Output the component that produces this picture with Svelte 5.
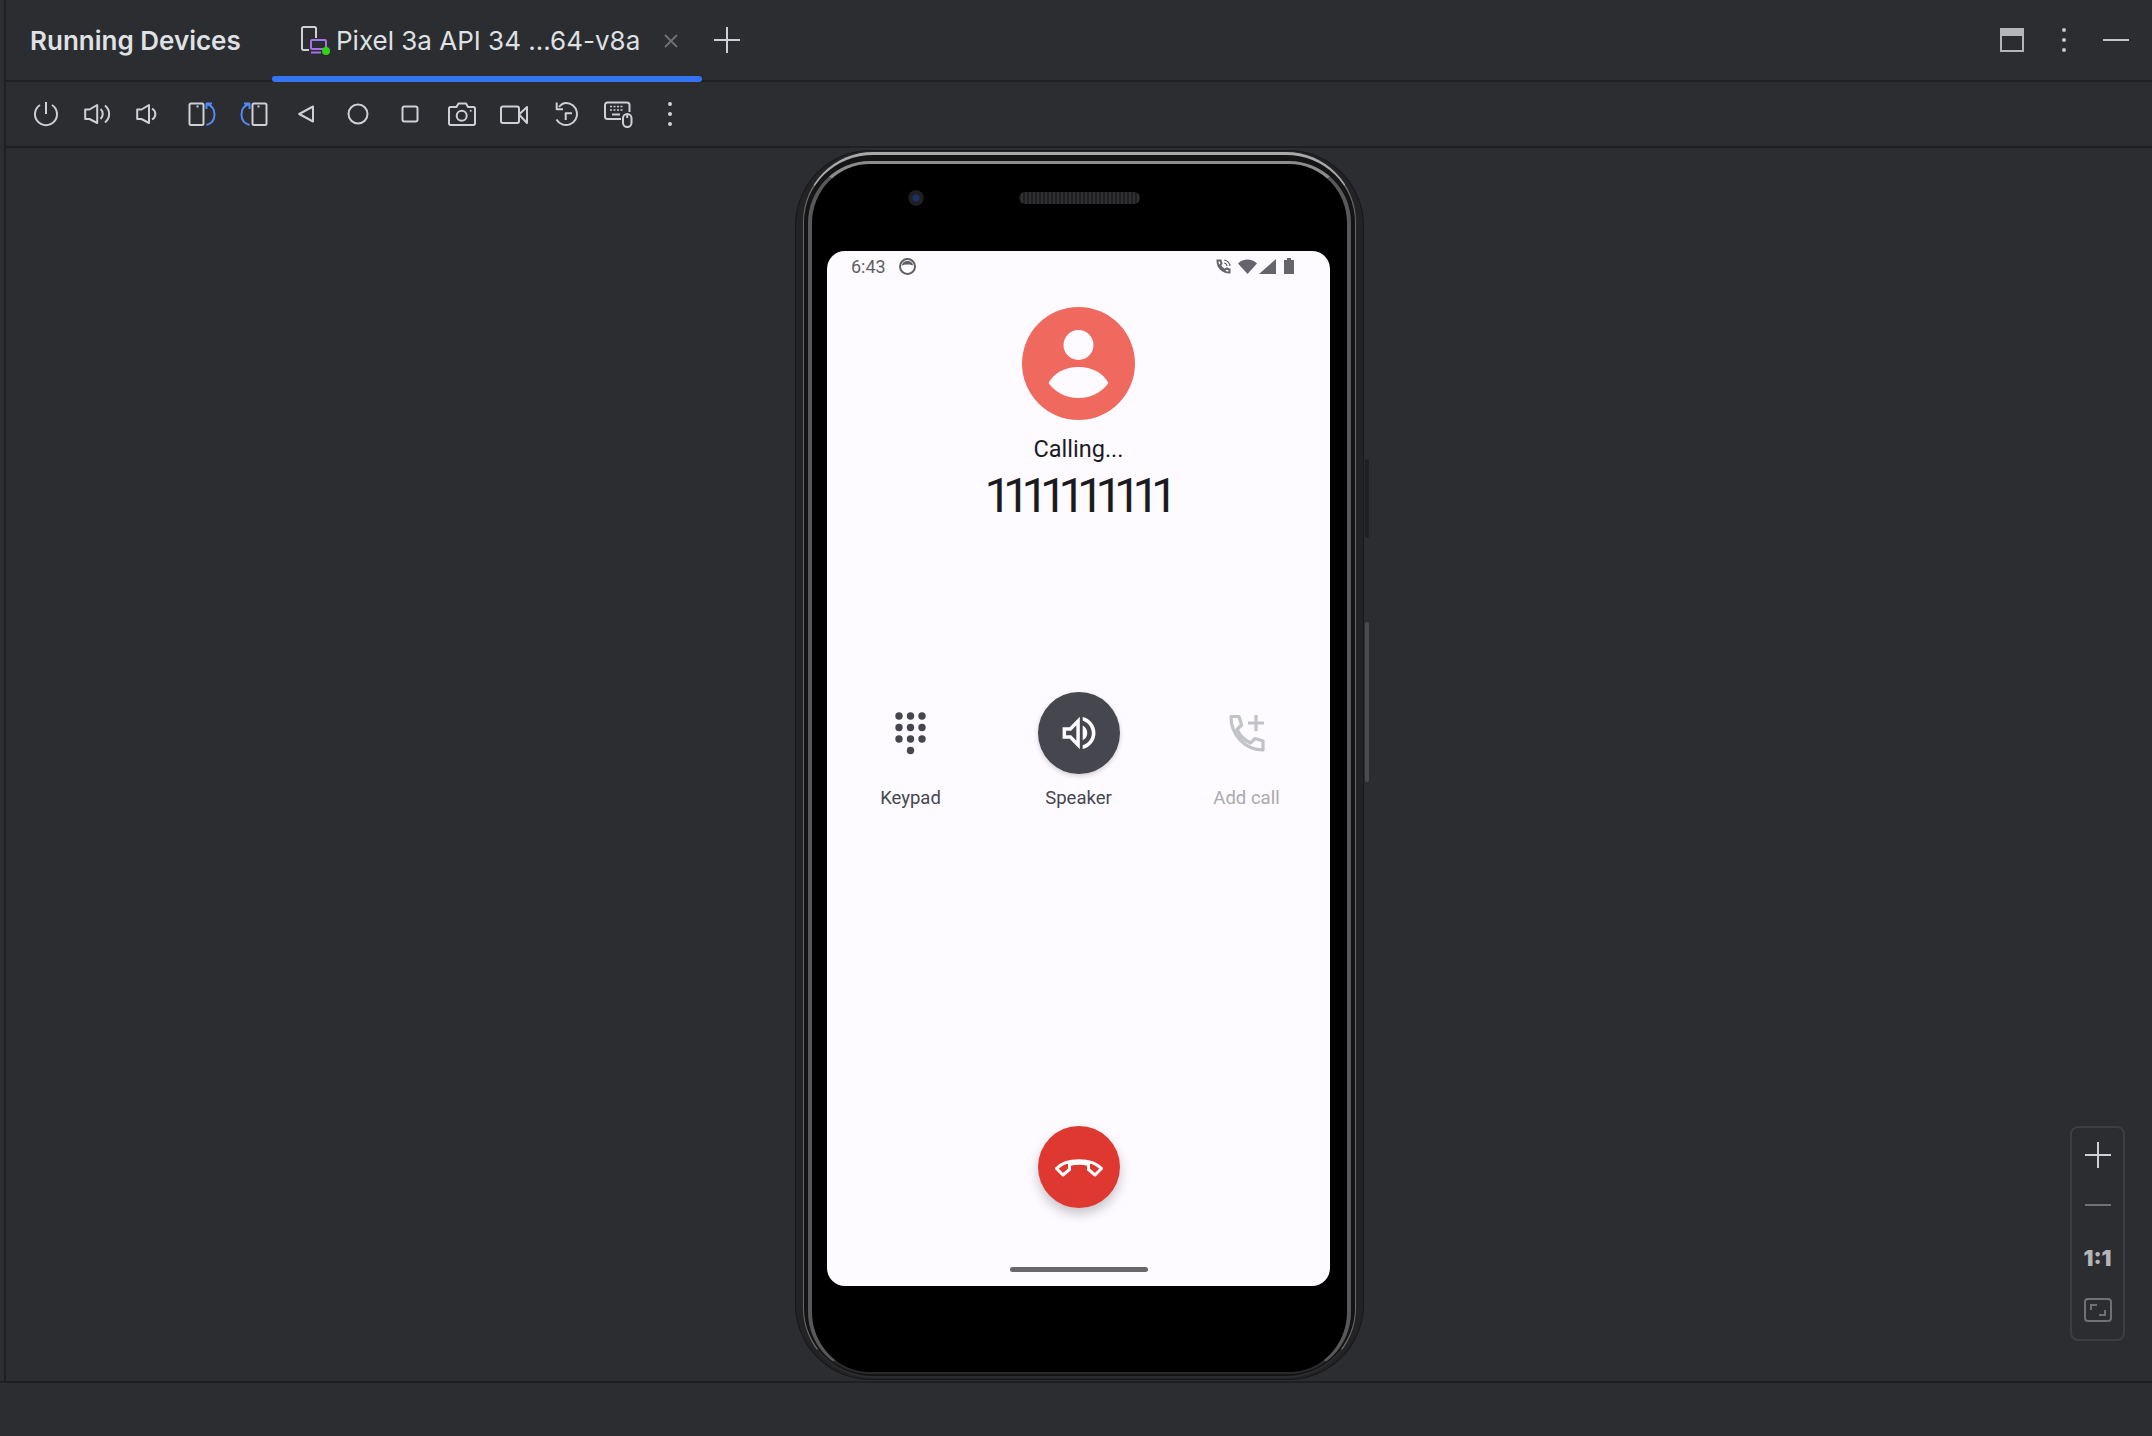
<script lang="ts">
  const actions = [
    { label: 'Keypad' },
    { label: 'Speaker' },
    { label: 'Add call' }
  ]
  const keypadDots = [
    [5, 5], [16.5, 5], [28, 5],
    [5, 16.5], [16.5, 16.5], [28, 16.5],
    [5, 28], [16.5, 28], [28, 28],
    [16.5, 39.5]
  ]
</script>

<div class="panel">
  <header class="tabs">
    <span class="title">Running Devices</span>
    <div class="tab">
      <svg class="tab-icon" width="32" height="30" viewBox="0 0 32 30" fill="none">
        <path d="M9 25H3.5a1.5 1.5 0 0 1-1.5-1.5V3.5A1.5 1.5 0 0 1 3.500 2h11A1.500 1.500 0 0 1 16 3.500V13" stroke="#ced0d6" stroke-width="2"/>
        <rect x="11" y="15" width="15" height="9" rx="1" stroke="#a571e6" stroke-width="2"/>
        <path d="M11 27.500h10" stroke="#a571e6" stroke-width="2"/>
        <circle cx="26" cy="26" r="4" fill="#2fd41a"/>
      </svg>
      <span class="tab-name">Pixel 3a API 34 ...64-v8a</span>
      <svg class="tab-close" width="16" height="16" viewBox="0 0 16 16" fill="none">
        <path d="M2 2l12 12M14 2L2 14" stroke="#6f7175" stroke-width="1.800"/>
      </svg>
      <span class="underline"></span>
    </div>
    <svg class="add" width="28" height="28" viewBox="0 0 28 28" fill="none">
      <path d="M14 1v26M1 14h26" stroke="#ced0d6" stroke-width="2"/>
    </svg>
    <div class="window-actions">
      <svg width="24" height="24" viewBox="0 0 24 24" fill="none">
        <rect x="1" y="1" width="22" height="22" stroke="#b4b5b8" stroke-width="2"/>
        <rect x="0" y="0" width="24" height="8" fill="#b4b5b8"/>
      </svg>
      <svg class="kebab-small" width="6" height="26" viewBox="0 0 6 26" fill="#c4c5c8">
        <circle cx="3" cy="3" r="2"/><circle cx="3" cy="13" r="2"/><circle cx="3" cy="23" r="2"/>
      </svg>
      <span class="minimize"></span>
    </div>
  </header>

  <div class="toolbar">
    <svg viewBox="0 0 28 28" class="icon">
      <path d="M8 5A11 11 0 1 0 20 5M14 2v12"/>
    </svg>
    <svg viewBox="0 0 28 28" class="icon">
      <path d="M1.200 9.500H5.500L13.200 5V23L5.500 19H1.200Z"/>
      <path d="M16.500 9C19.500 11.500 19.500 16.500 16.500 19M21 5.500C26.500 10 26.500 18 21 22.500"/>
    </svg>
    <svg viewBox="0 0 28 28" class="icon">
      <path d="M1.200 9.500H5.500L13 5V23L5.500 19H1.200Z"/>
      <path d="M16 8.500C20.500 11 20.500 17 16 19.500"/>
    </svg>
    <svg viewBox="0 0 28 28" class="icon">
      <rect x="1.500" y="3.500" width="14" height="21.500" rx="1.500"/>
      <path d="M8.500 6.500h2" />
      <path class="blue" d="M19 4C23.500 5.500 26.500 9.500 26.500 14.500S23.500 23.500 18.500 25M18.500 9V3.500H24"/>
    </svg>
    <svg viewBox="0 0 28 28" class="icon">
      <rect x="12.500" y="3.500" width="14" height="21.500" rx="1.500"/>
      <path d="M17.500 6.500h2" />
      <path class="blue" d="M9 4C4.500 5.500 1.500 9.500 1.500 14.500S4.500 23.500 9.500 25M9.500 9V3.500H4"/>
    </svg>
    <svg viewBox="0 0 28 28" class="icon">
      <path d="M21 6.500V21.500L7.200 14Z"/>
    </svg>
    <svg viewBox="0 0 28 28" class="icon">
      <circle cx="14" cy="14" r="9.500"/>
    </svg>
    <svg viewBox="0 0 28 28" class="icon">
      <rect x="6.500" y="6.500" width="15" height="15" rx="2"/>
    </svg>
    <svg viewBox="0 0 28 28" class="icon">
      <path d="M2.500 7H8.500L10.500 3.500H18L20 7H25.500A1.500 1.500 0 0 1 27 8.500V23.500A1.500 1.500 0 0 1 25.500 25H2.500A1.500 1.500 0 0 1 1 23.500V8.500A1.500 1.500 0 0 1 2.500 7Z"/>
      <circle cx="13.700" cy="15.700" r="5"/>
      <circle class="dot" cx="22.700" cy="10.700" r="1"/>
    </svg>
    <svg viewBox="0 0 28 28" class="icon">
      <rect x="1" y="6.500" width="18" height="16.500" rx="2"/>
      <path d="M19 14.500L27 7V23Z"/>
    </svg>
    <svg viewBox="0 0 28 28" class="icon">
      <path d="M7 7C9 4.500 11 3 14 3A11 11 0 1 1 4.500 19.500"/>
      <path d="M4.700 2.500V9.300H11M20 13.300H13.700V20"/>
    </svg>
    <svg viewBox="0 0 28 28" class="icon">
      <path d="M17 19H3.500A2.500 2.500 0 0 1 1 16.500V5A2.500 2.500 0 0 1 3.500 2.500H23A2.500 2.500 0 0 1 25.500 5V12"/>
      <path class="thin" d="M6 6.500h14M6 10h14" stroke-dasharray="2 1.500"/>
      <path d="M8 14.500h8"/>
      <rect x="19" y="14" width="8.500" height="13" rx="4.200"/>
      <path d="M23.200 14v4"/>
    </svg>
    <svg viewBox="0 0 28 28" class="icon">
      <circle class="dot" cx="14" cy="4" r="2"/>
      <circle class="dot" cx="14" cy="14" r="2"/>
      <circle class="dot" cx="14" cy="24" r="2"/>
    </svg>
  </div>

  <main class="stage">
    <div class="phone">
      <span class="side-btn power"></span>
      <span class="side-btn volume"></span>
      <div class="midframe">
        <div class="bezel">
          <span class="camera"></span>
          <span class="earpiece"></span>
          <div class="screen">
            <div class="statusbar">
              <span class="clock">6:43</span>
              <svg class="face" width="17" height="17" viewBox="0 0 17 17">
                <circle cx="8.500" cy="8.500" r="7.500" fill="#fff" stroke="#5f5f66" stroke-width="2"/>
                <path d="M3 7.500C3.500 4 6 3 8.500 3S13.500 4 14 7.500C11.500 6 5.500 6 3 7.500Z" fill="#5f5f66"/>
              </svg>
              <span class="status-gap"></span>
              <svg width="15" height="15" viewBox="0 0 15 15" fill="none">
                <path d="M1.500 1.500H4.500L5.500 4.500L4 6.200C5 8.500 6.500 10 8.800 11L10.500 9.500L13.500 10.500V13.500C6.500 13.500 1.500 8.500 1.500 1.500Z" stroke="#66646b" stroke-width="2"/>
                <path d="M8 4C9.500 4.200 10.800 5.500 11 7M8 1C11 1.200 13.800 4 14 7" stroke="#66646b" stroke-width="1.200"/>
              </svg>
              <svg class="wifi" width="19" height="15" viewBox="0 0 19 15">
                <path d="M0 4.500C5 -0.800 14 -0.800 19 4.500L9.500 15Z" fill="#66646b"/>
              </svg>
              <svg class="signal" width="17" height="15" viewBox="0 0 17 15">
                <path d="M17 0V15H0Z" fill="#66646b"/>
              </svg>
              <svg class="battery" width="10" height="16" viewBox="0 0 10 16">
                <path d="M3 0H7V2H10V16H0V2H3Z" fill="#66646b"/>
              </svg>
            </div>

            <svg class="avatar" width="113" height="113" viewBox="0 0 113 113">
              <circle cx="56.500" cy="56.500" r="56.500" fill="#f0695e"/>
              <circle cx="56.500" cy="38" r="15" fill="#fdfbff"/>
              <path d="M26.500 76C32 66 43 60 56.500 60C70 60 81 66 86.500 76C80 85 69 91 56.500 91C44 91 33 85 26.500 76Z" fill="#fdfbff"/>
            </svg>
            <div class="calling">Calling...</div>
            <div class="number">1111111111</div>

            <div class="actions">
              {#each actions as action, i}
                <div class="action" class:disabled={i === 2}>
                  <div class="action-btn" class:active={i === 1}>
                    {#if i === 0}
                      <svg width="33" height="44" viewBox="0 0 33 44" fill="#46464f">
                        {#each keypadDots as [cx, cy]}
                          <circle {cx} {cy} r="3.700"/>
                        {/each}
                      </svg>
                    {:else if i === 1}
                      <svg width="44" height="44" viewBox="0 0 24 24" fill="#fdfbff">
                        <path d="M4 9.800v4.400h3.300l4.200 4.300V5.500L7.300 9.800H4Z" fill="none" stroke="#fdfbff" stroke-width="1.900"/>
                        <path d="M16.500 12c0-1.770-1.020-3.290-2.500-4.030v8.050c1.480-.73 2.500-2.250 2.500-4.020z"/>
                        <path d="M14 3.230v2.060c2.890.86 5 3.540 5 6.710s-2.110 5.850-5 6.710v2.060c4.010-.91 7-4.490 7-8.770s-2.990-7.860-7-8.770z"/>
                      </svg>
                    {:else}
                      <svg width="36" height="38" viewBox="0 0 36 38" fill="none" stroke="#c1c3c6" stroke-width="3.200">
                        <path d="M2 2.500H10L12.500 11L8 15.500C11 22 15 26 21.500 29L26 24.500L34 27V36C16 36 2 21 2 2.500Z" stroke-linejoin="round"/>
                        <path d="M27 1V17M19 9H35"/>
                      </svg>
                    {/if}
                  </div>
                  <span class="action-label">{action.label}</span>
                </div>
              {/each}
            </div>

            <div class="end-call">
              <svg width="48" height="20" viewBox="0 0 48 20" fill="none">
                <path d="M14.500 7.500C20 6 28 6 33.500 7.500V12.500L40 18L46.500 11.500C37 1 11 1 1.500 11.500L8 18L14.500 12.500Z" stroke="#fff" stroke-width="3" stroke-linejoin="round"/>
              </svg>
            </div>
            <span class="home-bar"></span>
          </div>
        </div>
      </div>
    </div>

    <div class="zoom-controls">
      <svg width="26" height="26" viewBox="0 0 26 26">
        <path d="M13 0v26M0 13h26" stroke="#ced0d6" stroke-width="2"/>
      </svg>
      <span class="zoom-out"></span>
      <span class="one-to-one">1:1</span>
      <svg width="28" height="24" viewBox="0 0 28 24" fill="none" stroke="#6f7175" stroke-width="2">
        <rect x="1" y="1" width="26" height="22" rx="3"/>
        <path d="M7 12V7H13M21 12V17H15"/>
      </svg>
    </div>
  </main>
</div>
<div class="footer"></div>

<style>
  :global(body) {
    margin: 0;
    background: #2b2d30;
    font-family: Inter, "Liberation Sans", sans-serif;
  }

  .panel {
    margin-left: 4px;
    border-left: 2px solid #1e1f22;
    height: 1381px;
    display: flex;
    flex-direction: column;
    box-sizing: border-box;
  }

  .tabs {
    height: 82px;
    flex-shrink: 0;
    box-sizing: border-box;
    border-bottom: 2px solid #1e1f22;
    display: flex;
    align-items: center;
    padding: 0 23px 0 24px;
    color: #dfe1e5;
  }
  .title { font-size: 26px; font-weight: 600; width: 242px; flex-shrink: 0; }
  .tab {
    position: relative;
    display: flex;
    align-items: center;
    width: 430px;
    height: 80px;
    box-sizing: border-box;
    padding-left: 28px;
    flex-shrink: 0;
  }
  .tab-icon { flex-shrink: 0; }
  .tab-name { font-size: 26px; margin-left: 4px; white-space: nowrap; }
  .tab-close { position: absolute; left: 391px; top: 33px; }
  .underline {
    position: absolute;
    left: 0;
    right: 0;
    bottom: -2px;
    height: 6px;
    border-radius: 3px;
    background: #3574f0;
  }
  .add { margin-left: 11px; }
  .window-actions {
    margin-left: auto;
    display: flex;
    align-items: center;
  }
  .kebab-small { margin: 0 36px 0 37px; }
  .minimize { width: 26px; height: 2px; background: #c4c5c8; }

  .toolbar {
    height: 66px;
    flex-shrink: 0;
    box-sizing: border-box;
    border-bottom: 2px solid #1e1f22;
    padding-left: 26px;
    display: flex;
    align-items: center;
    gap: 24px;
  }
  .icon {
    width: 28px;
    height: 28px;
    flex-shrink: 0;
    fill: none;
    stroke: #ced0d6;
    stroke-width: 2;
    stroke-linejoin: round;
    overflow: visible;
  }
  .icon .blue { stroke: #548af7; }
  .icon .dot { fill: #ced0d6; stroke: none; }
  .icon .thin { stroke-width: 1.600; }

  .stage {
    position: relative;
    flex: 1;
    display: flex;
    justify-content: center;
    align-items: flex-start;
    padding: 2px 0 0 1px;
  }

  .phone {
    position: relative;
    width: 569px;
    height: 1230px;
    box-sizing: border-box;
    padding: 2px 8px;
    border-radius: 76px;
    background: #232325;
    box-shadow: inset 0 0 0 1px #18181a;
  }
  .side-btn {
    position: absolute;
    left: 570px;
    width: 4px;
    border-radius: 2px;
  }
  .power { top: 309px; height: 79px; background: #1f2022; }
  .volume { top: 472px; height: 160px; background: #4a4b4d; }

  .midframe {
    height: 100%;
    box-sizing: border-box;
    border-style: solid;
    border-width: 3px 1px 2px;
    border-color: #a9a9ab #6a6a6c #2c2c2e;
    border-radius: 70px;
    padding: 6px 4px 2px;
    background: #141415;
  }
  .bezel {
    position: relative;
    height: 100%;
    box-sizing: border-box;
    border-style: solid;
    border-width: 3px 4px 2px;
    border-color: #8c8c8e #58585a #2a2a2c;
    border-radius: 62px;
    background: #000;
    padding: 87px 17px 0 15px;
  }
  .camera {
    position: absolute;
    left: 96px;
    top: 26px;
    width: 16px;
    height: 16px;
    border-radius: 50%;
    background: radial-gradient(circle, #1d2f66 0 3px, #1f1f24 4px 7px, #121214 8px);
  }
  .earpiece {
    position: absolute;
    left: 207px;
    top: 28px;
    width: 121px;
    height: 12px;
    border-radius: 6px;
    background: repeating-linear-gradient(90deg, #1f1f21 0 2px, #313133 2px 4px);
  }

  .screen {
    height: 1035px;
    border-radius: 18px;
    background: #fdfbff;
    display: flex;
    flex-direction: column;
    align-items: center;
    overflow: hidden;
    font-family: Roboto, "Noto Sans", sans-serif;
  }

  .statusbar {
    align-self: stretch;
    height: 30px;
    flex-shrink: 0;
    box-sizing: border-box;
    padding: 0 36px 0 24px;
    display: flex;
    align-items: center;
    color: #5f5f66;
  }
  .clock { font-size: 18px; width: 48px; }
  .status-gap { flex: 1; }
  .wifi { margin-left: 7px; }
  .signal { margin-left: 2px; }
  .battery { margin-left: 8px; }

  .avatar { margin-top: 26px; flex-shrink: 0; }
  .calling {
    margin-top: 13px;
    font-size: 23.500px;
    line-height: 32px;
    color: #1b1b1f;
  }
  .number {
    margin-top: 3px;
    font-size: 48px;
    line-height: 56px;
    letter-spacing: -8.500px;
    padding-right: 3px;
    color: #1b1b1f;
  }

  .actions {
    margin-top: 168px;
    align-self: stretch;
    display: grid;
    grid-template-columns: repeat(3, 168px);
    justify-content: center;
  }
  .action {
    display: flex;
    flex-direction: column;
    align-items: center;
    gap: 11px;
  }
  .action-btn {
    width: 82px;
    height: 82px;
    border-radius: 50%;
    display: flex;
    align-items: center;
    justify-content: center;
  }
  .action-btn.active {
    background: #46464f;
    box-shadow: 0 2px 5px rgba(0, 0, 0, 0.18);
  }
  .action-label { font-size: 18.500px; line-height: 26px; color: #46464f; }
  .disabled .action-label { color: #abaaae; }

  .end-call {
    margin-top: 315px;
    width: 82px;
    height: 82px;
    flex-shrink: 0;
    border-radius: 50%;
    background: #df3831;
    display: flex;
    align-items: center;
    justify-content: center;
    box-shadow: 0 6px 12px rgba(0, 0, 0, 0.22);
  }
  .home-bar {
    margin-top: 59px;
    width: 138px;
    height: 5px;
    flex-shrink: 0;
    border-radius: 3px;
    background: #69676c;
  }

  .zoom-controls {
    position: absolute;
    right: 27px;
    top: 978px;
    width: 55px;
    height: 215px;
    box-sizing: border-box;
    border: 2px solid #3c3e41;
    border-radius: 8px;
    display: flex;
    flex-direction: column;
    align-items: center;
    padding-top: 14px;
  }
  .zoom-out { width: 26px; height: 2px; background: #6f7175; margin-top: 36px; }
  .one-to-one {
    margin-top: 39px;
    font-size: 22px;
    line-height: 26px;
    font-weight: 900;
    color: #b4b5b8;
  }
  .zoom-controls svg:last-child { margin-top: 27px; }

  .footer {
    height: 55px;
    border-top: 2px solid #1e1f22;
    box-sizing: border-box;
  }
</style>
